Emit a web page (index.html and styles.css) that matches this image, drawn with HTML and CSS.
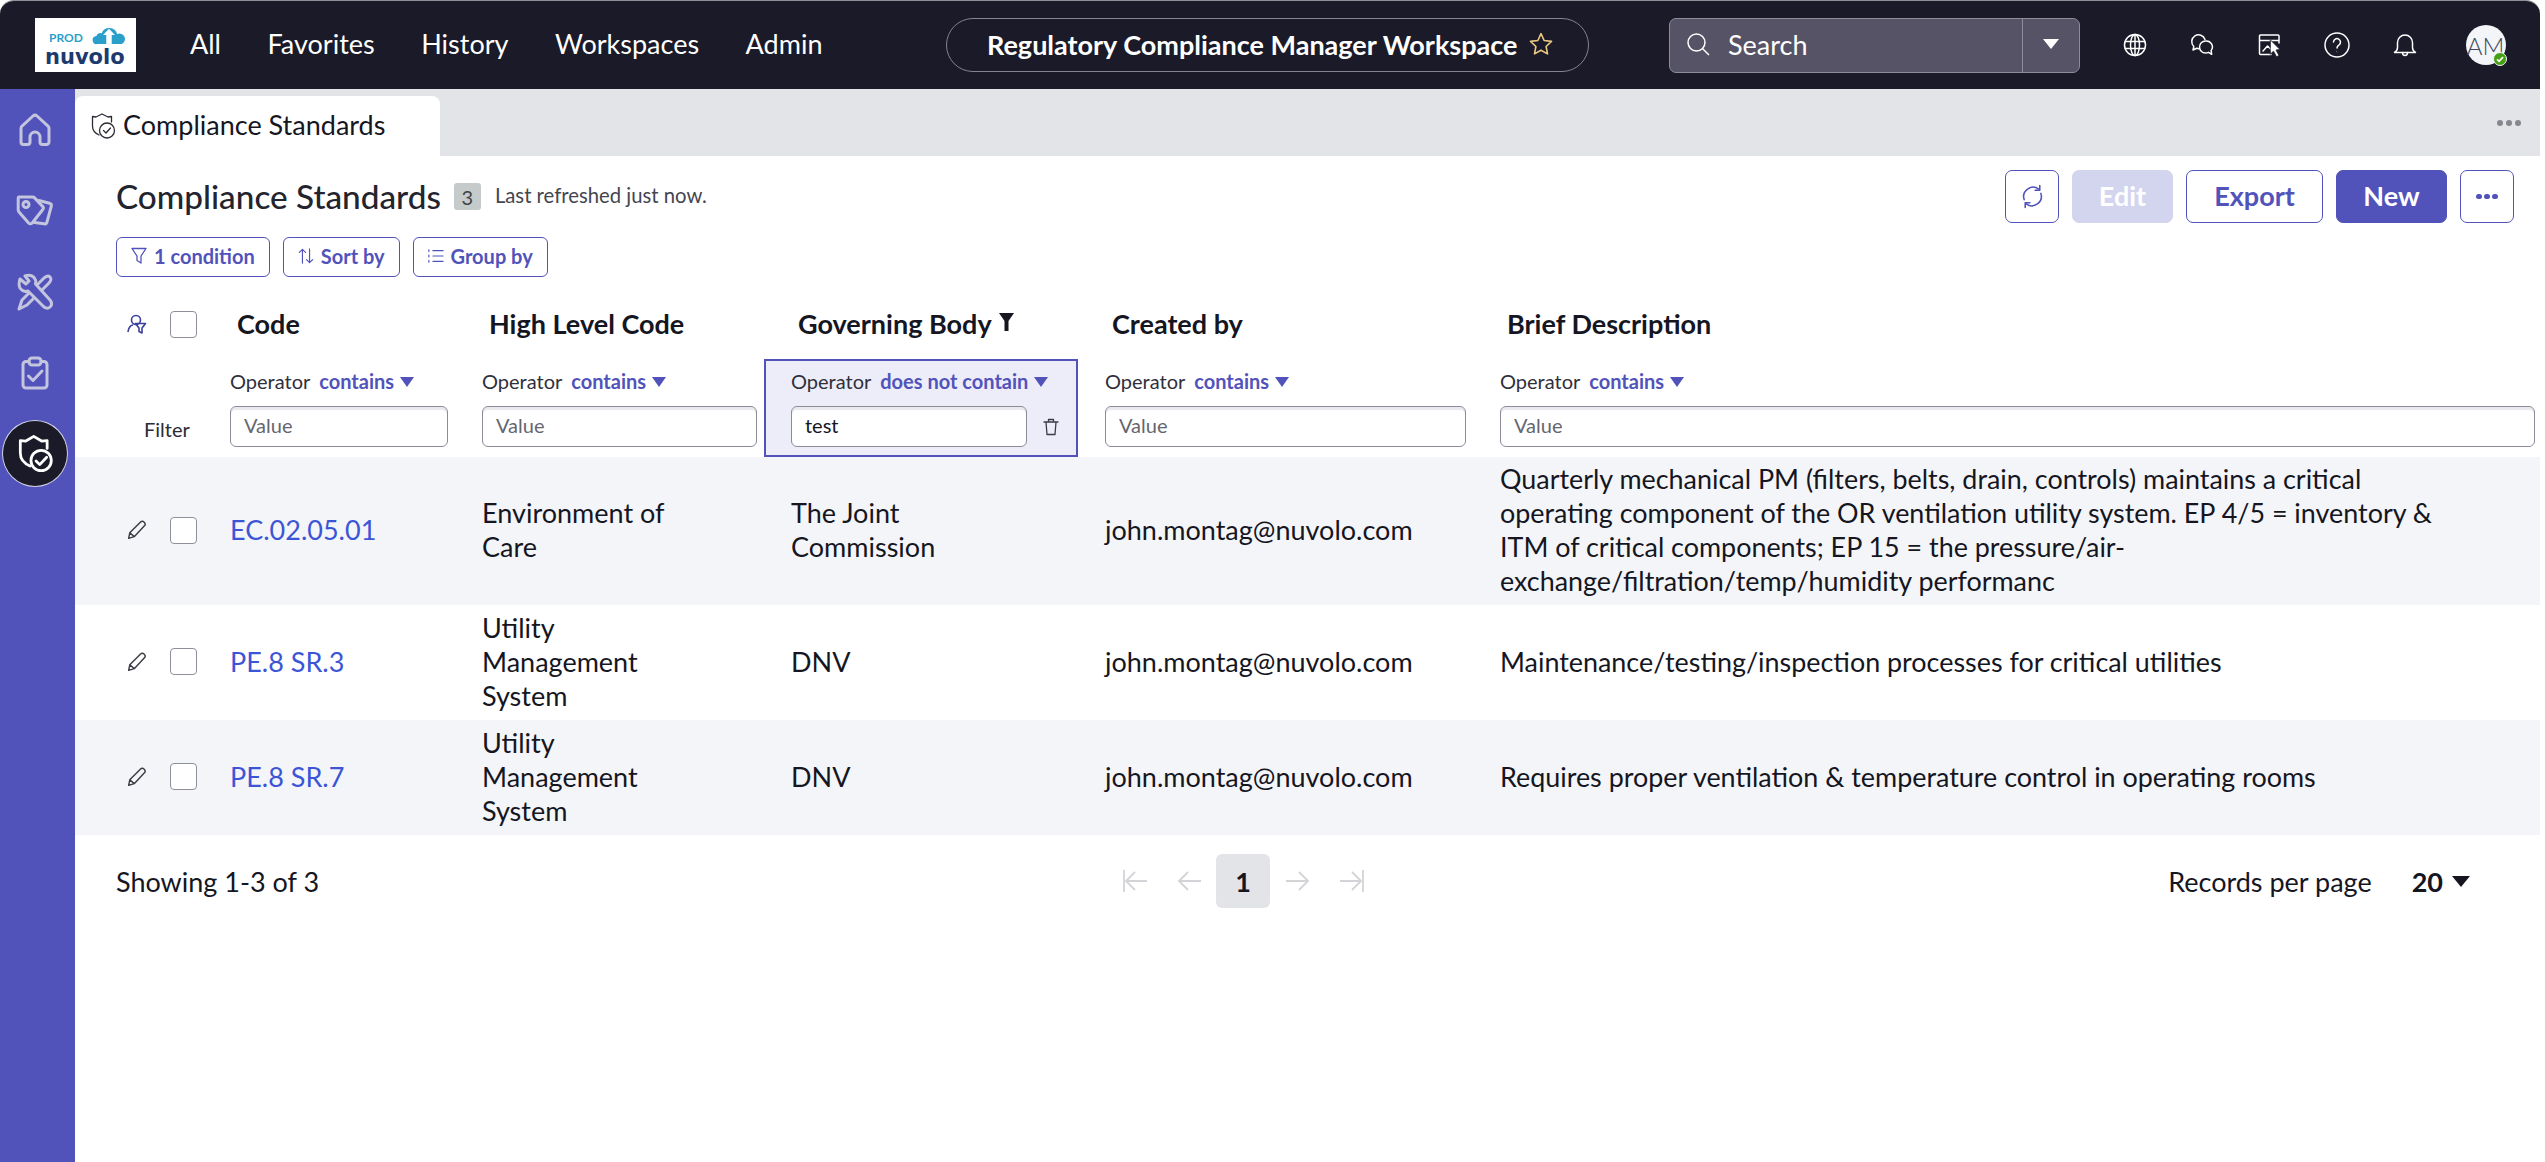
FILE: index.html
```html
<!DOCTYPE html>
<html lang="en">
<head>
<meta charset="utf-8">
<title>Compliance Standards</title>
<link rel="stylesheet" href="styles.css">
</head>
<body>
<div class="app">
  <header class="topbar">
    <div class="logo">
      <div class="logo-top">
        <span class="logo-prod">PROD</span>
        <svg class="logo-cloud" viewBox="0 0 36 22"><path fill="#2a9fc9" d="M5 21a4.500 4.500 0 0 1-1-9 5 5 0 0 1 6-3 9 9 0 0 1 17 1 5.500 5.500 0 0 1 5 11z"/><path fill="#fff" d="M18 4l6.500 7H21v10h-6V11h-3.500z"/></svg>
      </div>
      <span class="logo-name">nuvolo</span>
    </div>
    <nav class="nav">
      <a>All</a><a>Favorites</a><a>History</a><a>Workspaces</a><a>Admin</a>
    </nav>
    <div class="pill">
      <span>Regulatory Compliance Manager Workspace</span>
      <svg class="star" viewBox="0 0 24 24"><path d="M12 2.500l2.900 6.300 6.800.8-5 4.700 1.300 6.800-6-3.400-6 3.400 1.300-6.800-5-4.700 6.800-.8z"/></svg>
    </div>
    <div class="search">
      <div class="search-main">
        <svg class="search-icon" viewBox="0 0 24 24"><circle cx="10.500" cy="10.500" r="8.500"/><path d="M16.500 16.500L23 23"/></svg>
        <span>Search</span>
      </div>
      <div class="search-drop"><i class="caret-white"></i></div>
    </div>
    <div class="top-icons">
      <div class="ti"><svg viewBox="0 0 24 24"><circle cx="12" cy="12" r="10.500"/><ellipse cx="12" cy="12" rx="4.500" ry="10.500"/><path d="M2.200 8.500h19.600M2.200 15.500h19.600M12 1.500v21"/></svg></div>
      <div class="ti"><svg viewBox="0 0 24 24"><path d="M15 6.500A6.800 6.800 0 1 0 3.800 13.500L3 17l3.800-1.800c.7.300 1.400.4 2.200.5"/><path d="M15.500 8a6 6 0 1 0 0 12c1.100 0 2.100-.2 3-.7l3.200 2-.6-3.700A6 6 0 0 0 15.500 8z"/></svg></div>
      <div class="ti"><svg viewBox="0 0 24 24"><path d="M21 10V3a1 1 0 0 0-1-1H2.500a1 1 0 0 0-1 1v17.500a1 1 0 0 0 1 1H13M1.500 7.500H21M5 18l4.500-5 3 3"/><path class="fill" d="M12.500 7l9.500 9.500-4 .5 3 5.500-2.500 1.300-3-5.600-3 2.800z"/></svg></div>
      <div class="ti"><svg class="tall" viewBox="0 0 26 26"><circle cx="13" cy="13" r="12"/><path d="M9.500 10a3.500 3.500 0 1 1 5.500 3c-1.400.9-2 1.500-2 3"/><circle class="fill" cx="13" cy="19.500" r=".8"/></svg></div>
      <div class="ti"><svg viewBox="0 0 24 24"><path d="M1.500 19.500c1.800-1 3-2.500 3-5V9.500a7.500 7.500 0 0 1 15 0v5c0 2.500 1.200 4 3 5z"/><path d="M9.500 19.500c0 4 5 4 5 0"/></svg></div>
      <div class="avatar">AM<span class="status"><svg viewBox="0 0 12 12"><path d="M3 6.300l2.100 2L9 4.200"/></svg></span></div>
    </div>
  </header>

  <div class="body">
    <aside class="side">
      <a class="side-item"><svg class="s-home" viewBox="0 0 34 34"><path d="M3 29V15.500a3 3 0 0 1 1-2.300L15 3a3 3 0 0 1 4 0l11 10.200a3 3 0 0 1 1 2.300V29a2.500 2.500 0 0 1-2.500 2.500h-4A2.500 2.500 0 0 1 22 29v-5a5 5 0 0 0-10 0v5a2.500 2.500 0 0 1-2.500 2.500h-4A2.500 2.500 0 0 1 3 29z"/></svg></a>
      <a class="side-item"><svg class="s-tag" viewBox="0 0 38 32"><path d="M3 2h13.500a3 3 0 0 1 2.100.9l8 8.500a2.500 2.500 0 0 1 0 3.400L16.200 28a2.500 2.500 0 0 1-3.600 0L3 17a3 3 0 0 1-.8-2V3a1 1 0 0 1 .8-1z"/><circle cx="10" cy="9.500" r="3"/><path d="M23 5.500l10.500 2.700a2.500 2.500 0 0 1 1.800 3L31 27a2.500 2.500 0 0 1-3 1.800l-9.500-1.300"/></svg></a>
      <a class="side-item"><svg class="s-tools" viewBox="0 0 36 38"><path d="M2 36l3-9L27 5c2-2 4.500-2.500 6-1s1 4-1 6L10 32z"/><path class="wrench" d="M3 6l6 5 3-3-4-5c5-2 9 0 10.500 4 .5 1.500.3 3 0 4L33 27c2.500 3 1.500 5.500 0 7-2 1.800-5 1.500-7-1L11 18c-3 1-6 0-8-3-1.500-3-1-6 0-9z"/></svg></a>
      <a class="side-item"><svg class="s-clip" viewBox="0 0 28 34"><path d="M8 5.500H5a3 3 0 0 0-3 3V29a3 3 0 0 0 3 3h18a3 3 0 0 0 3-3V8.500a3 3 0 0 0-3-3h-3"/><rect x="8" y="2" width="12" height="7" rx="3"/><path d="M7.500 20l4.500 4.500L21 15"/></svg></a>
      <a class="side-item active"><svg class="s-shield" viewBox="0 0 40 40"><path d="M13 33C6 30 2.500 25 2.500 19V5.500l6 .5 8.500-5 8.500 5 6-.5V14"/><circle cx="25" cy="27" r="11"/><path d="M19.500 27.500l4 4L31 23.500"/></svg></a>
    </aside>

    <main class="content">
      <div class="tabs">
        <div class="tab">
          <svg class="tab-icon" viewBox="0 0 26 26"><path d="M8 22C3.500 20 1.500 16.500 1.500 13V3.500l3.500.5 6-3 6 3 3.500-.5V9"/><circle cx="16" cy="17.500" r="7.500"/><path d="M12.500 17.500l2.500 2.500 4.500-5"/></svg>
          <span>Compliance Standards</span>
        </div>
        <div class="tabs-more"><i></i><i></i><i></i></div>
      </div>

      <section class="page">
        <div class="page-head">
          <div class="title-wrap">
            <h1>Compliance Standards</h1>
            <span class="count">3</span>
            <span class="refreshed">Last refreshed just now.</span>
          </div>
          <div class="actions">
            <button class="btn icon-btn"><svg viewBox="0 0 24 24"><path d="M4 15A9 9 0 0 1 18 5M20 9a9 9 0 0 1-14 10"/><path d="M19 1.500V6h-4.500M5 22.500V18h4.500"/></svg></button>
            <button class="btn disabled">Edit</button>
            <button class="btn outline">Export</button>
            <button class="btn solid">New</button>
            <button class="btn icon-btn"><span class="dots"><i></i><i></i><i></i></span></button>
          </div>
        </div>
        <div class="chips">
          <button class="chip"><svg viewBox="0 0 16 18"><path d="M1 1.500h14L10 9v7l-4-2.500V9z"/></svg>1 condition</button>
          <button class="chip"><svg viewBox="0 0 18 18"><path d="M5 17V1.500M1.500 5L5 1.500 8.500 5M13 1v15.500M9.500 13l3.500 3.500 3.500-3.500"/></svg>Sort by</button>
          <button class="chip"><svg viewBox="0 0 18 18"><path d="M5.500 3H17M5.500 9H17M5.500 15H17M1 2v2M1 8v2M1 14v2"/></svg>Group by</button>
        </div>

        <div class="table">
          <div class="grid head">
            <div class="tools">
              <svg class="personalize" viewBox="0 0 20 20"><circle cx="9" cy="6" r="4.500"/><path d="M1 18c.5-4 2-6.500 5-7M8.500 9.500h10l-3.500 4.500v5l-3-1.500V14z"/></svg>
              <span class="check"></span>
            </div>
            <div class="th">Code</div>
            <div class="th">High Level Code</div>
            <div class="th">Governing Body<svg class="th-funnel" viewBox="0 0 15 18"><path d="M0 0h15L9.500 8v10h-4V8z"/></svg></div>
            <div class="th">Created by</div>
            <div class="th">Brief Description</div>
          </div>

          <div class="grid filters">
            <div class="filter-label">Filter</div>
            <div class="fc">
              <div class="op">Operator <b>contains</b><i class="caret-blue"></i></div>
              <input class="val" placeholder="Value">
            </div>
            <div class="fc">
              <div class="op">Operator <b>contains</b><i class="caret-blue"></i></div>
              <input class="val" placeholder="Value">
            </div>
            <div class="fc on">
              <div class="op">Operator <b>does not contain</b><i class="caret-blue"></i></div>
              <div class="val-row">
                <input class="val" value="test">
                <svg class="trash" viewBox="0 0 16 18"><path d="M1 4h14M5.500 4V1.500h5V4M3 4l1 12.500h8L13 4"/></svg>
              </div>
            </div>
            <div class="fc">
              <div class="op">Operator <b>contains</b><i class="caret-blue"></i></div>
              <input class="val" placeholder="Value">
            </div>
            <div class="fc last">
              <div class="op">Operator <b>contains</b><i class="caret-blue"></i></div>
              <input class="val" placeholder="Value">
            </div>
          </div>

          <div class="grid row alt">
            <div class="tools"><svg class="pencil" viewBox="0 0 18 18"><path d="M1.500 16.500l1-5L12 2c1-1 2.500-1 3.500 0s1 2.500 0 3.500L6.500 15zM2.500 11.500l4 3.500"/></svg><span class="check"></span></div>
            <div class="td"><a class="link">EC.02.05.01</a></div>
            <div class="td"><span class="narrow">Environment of Care</span></div>
            <div class="td"><span class="narrow">The Joint Commission</span></div>
            <div class="td">john.montag@nuvolo.com</div>
            <div class="td"><span class="desc">Quarterly mechanical PM (filters, belts, drain, controls) maintains a critical operating component of the OR ventilation utility system. EP 4/5 = inventory &amp; ITM of critical components; EP 15 = the pressure/air-exchange/filtration/temp/humidity performanc</span></div>
          </div>
          <div class="grid row">
            <div class="tools"><svg class="pencil" viewBox="0 0 18 18"><path d="M1.500 16.500l1-5L12 2c1-1 2.500-1 3.500 0s1 2.500 0 3.500L6.500 15zM2.500 11.500l4 3.500"/></svg><span class="check"></span></div>
            <div class="td"><a class="link">PE.8 SR.3</a></div>
            <div class="td"><span class="narrow">Utility Management System</span></div>
            <div class="td">DNV</div>
            <div class="td">john.montag@nuvolo.com</div>
            <div class="td"><span class="desc">Maintenance/testing/inspection processes for critical utilities</span></div>
          </div>
          <div class="grid row alt">
            <div class="tools"><svg class="pencil" viewBox="0 0 18 18"><path d="M1.500 16.500l1-5L12 2c1-1 2.500-1 3.500 0s1 2.500 0 3.500L6.500 15zM2.500 11.500l4 3.500"/></svg><span class="check"></span></div>
            <div class="td"><a class="link">PE.8 SR.7</a></div>
            <div class="td"><span class="narrow">Utility Management System</span></div>
            <div class="td">DNV</div>
            <div class="td">john.montag@nuvolo.com</div>
            <div class="td"><span class="desc">Requires proper ventilation &amp; temperature control in operating rooms</span></div>
          </div>
        </div>

        <div class="foot">
          <div class="showing">Showing 1-3 of 3</div>
          <div class="pager">
            <svg viewBox="0 0 24 22"><path d="M1 0v22M24 11H3M12 2l-9 9 9 9"/></svg>
            <svg viewBox="0 0 24 22"><path d="M24 11H2M11 2l-9 9 9 9"/></svg>
            <span class="page-num">1</span>
            <svg viewBox="0 0 24 22"><path d="M0 11h22M13 2l9 9-9 9"/></svg>
            <svg viewBox="0 0 24 22"><path d="M23 0v22M0 11h21M12 2l9 9-9 9"/></svg>
          </div>
          <div class="rpp">Records per page <b>20</b><i class="caret-dark"></i></div>
        </div>
      </section>
    </main>
  </div>
</div>
</body>
</html>
```

FILE: styles.css
```css
* { box-sizing: border-box; }
html, body { margin: 0; height: 100%; background: #fff; overflow: hidden; }
body { font-family: "Lato", "Liberation Sans", sans-serif; color: #15161f; font-size: 27px; }
svg { display: block; fill: none; }
i { font-style: normal; }

.app { width: 2540px; height: 100vh; display: flex; flex-direction: column; background: #fff; border-radius: 14px 14px 0 0; overflow: hidden; border-top: 1px solid #8e8e96; }

/* top bar */
.topbar { height: 88px; flex: none; background: #1a1a28; display: flex; align-items: center; padding-left: 35px; color: #fff; }
.logo { width: 101px; height: 54px; background: #fff; display: flex; flex-direction: column; padding: 7px 0 0 10px; flex: none; }
.logo-top { display: flex; align-items: flex-end; gap: 9px; height: 20px; padding-left: 4px; }
.logo-prod { color: #2a9fc9; font-size: 12px; font-weight: 700; line-height: 14px; }
.logo-cloud { width: 34px; height: 20px; }
.logo-name { color: #1d3a6e; font-family: "DejaVu Sans", sans-serif; font-size: 21px; font-weight: 700; line-height: 24px; }
.nav { display: flex; gap: 46.500px; margin-left: 54px; width: 756px; flex: none; padding-bottom: 3px; }
.pill { width: 643px; height: 54px; flex: none; border: 1px solid #85858f; border-radius: 27px; display: flex; align-items: center; padding-left: 40px; gap: 11px; font-weight: 700; padding-bottom: 2px; }
.star { width: 26px; height: 26px; stroke: #e9c77f; stroke-width: 1.500; stroke-linejoin: round; }
.search { margin-left: 80px; width: 411px; height: 55px; flex: none; background: #565366; border: 1px solid #8d8c98; border-radius: 7px; display: flex; }
.search-main { flex: 1; display: flex; align-items: center; padding-left: 16px; gap: 18px; padding-bottom: 2px; }
.search-icon { width: 24px; height: 24px; stroke: #fff; stroke-width: 1.500; }
.search-drop { width: 57px; border-left: 1px solid #8d8c98; display: flex; align-items: center; justify-content: center; padding-bottom: 3px; }
.caret-white { width: 0; height: 0; border: 8.500px solid transparent; border-top: 10px solid #fff; border-bottom: 0; }
.top-icons { display: flex; align-items: center; margin-left: 21px; }
.ti { width: 67.500px; display: flex; justify-content: center; }
.ti svg { width: 24px; height: 24px; stroke: #fff; stroke-width: 1.500; stroke-linecap: round; stroke-linejoin: round; }
.ti svg.tall { width: 26px; height: 26px; }
.ti .fill { fill: #fff; stroke: #1a1a28; stroke-width: .8; }
.avatar { position: relative; margin-left: 27px; width: 40px; height: 40px; border-radius: 50%; background: #f4f5f8; color: #3d4a5f; font-size: 24px; font-weight: 300; display: flex; align-items: center; justify-content: center; }
.status { position: absolute; right: -1px; bottom: -1px; width: 14px; height: 14px; border-radius: 50%; background: #44a012; border: 1px solid #f4f5f8; }
.status svg { width: 12px; height: 12px; stroke: #fff; stroke-width: 1.800; }

/* body */
.body { flex: 1; display: flex; min-height: 0; }
.side { width: 75px; flex: none; background: #5153bb; display: flex; flex-direction: column; align-items: flex-start; padding-left: 2px; }
.side-item { width: 66px; height: 81px; flex: none; display: flex; align-items: center; justify-content: center; color: #c3c4de; }
.side-item svg { stroke: currentColor; stroke-width: 3; stroke-linecap: round; stroke-linejoin: round; }
.s-home { width: 34px; height: 34px; }
.s-tag { width: 38px; height: 32px; }
.s-tools { width: 36px; height: 38px; }
.s-tools .wrench { fill: #5153bb; }
.s-clip { width: 28px; height: 34px; }
.side-item.active { height: 67px; border-radius: 50%; background: #1a1a28; border: 1px solid #d4d4e6; color: #fff; margin-top: 7px; }
.s-shield { width: 37px; height: 40px; margin-left: 2px; }

.content { flex: 1; min-width: 0; display: flex; flex-direction: column; }
.tabs { height: 67px; flex: none; background: #e3e4e8; padding-top: 7px; display: flex; justify-content: space-between; }
.tab { width: 365px; background: #fff; border-radius: 8px 8px 0 0; display: flex; align-items: center; padding-left: 16px; gap: 6px; padding-bottom: 3px; }
.tab-icon { width: 26px; height: 26px; stroke: #2b2c36; stroke-width: 1.300; stroke-linecap: round; stroke-linejoin: round; margin-top: 3px; }
.tabs-more { display: flex; gap: 3px; align-items: center; padding-right: 19px; padding-bottom: 7px; }
.tabs-more i { width: 6px; height: 6px; border-radius: 50%; background: #85868e; }

.page-head { display: flex; justify-content: space-between; align-items: center; padding: 14px 26px 0 41px; }
.title-wrap { display: flex; align-items: center; }
h1 { margin: 0; font-size: 33.300px; font-weight: 500; color: #23242e; line-height: 53px; }
.count { margin-left: 13px; width: 27px; height: 27px; background: #c5cacb; border-radius: 3px; font-size: 20px; color: #444; display: flex; align-items: center; justify-content: center; }
.refreshed { margin-left: 14px; font-size: 20.300px; color: #44464f; padding-bottom: 3px; }
.actions { display: flex; gap: 13px; }
.btn { height: 53px; border-radius: 7px; font: 700 27px "Lato", sans-serif; background: #fff; color: #5153bb; border: 1px solid #5153bb; padding: 0 0 2px; display: flex; align-items: center; justify-content: center; }
.icon-btn { width: 54px; padding: 0; }
.icon-btn svg { width: 25px; height: 25px; stroke: #5153bb; stroke-width: 1.500; stroke-linecap: round; stroke-linejoin: round; }
.disabled { width: 101px; background: #d3d4ee; border-color: #d3d4ee; color: #fff; }
.outline { width: 137px; }
.solid { width: 111px; background: #5153bb; color: #fff; }
.dots { display: flex; gap: 2.500px; }
.dots i { width: 5.500px; height: 5.500px; border-radius: 50%; background: #5153bb; }

.chips { display: flex; gap: 13px; padding: 14px 0 0 41px; }
.chip { height: 40px; border: 1px solid #5153bb; border-radius: 6px; background: #fff; color: #5153bb; font: 700 20px "Lato", sans-serif; display: flex; align-items: center; gap: 7px; padding: 0 14px 2px; white-space: nowrap; }
.chip svg { width: 16px; height: 18px; stroke: #5153bb; stroke-width: 1.300; stroke-linejoin: round; stroke-linecap: round; }

.table { margin-top: 18px; }
.grid { display: grid; grid-template-columns: 128px 252px 309px 314px 395px 1067px; }
.head { height: 64px; align-items: center; padding-bottom: 7px; }
.head .tools { padding-top: 3px; }
.th { padding-left: 34px; font-weight: 700; display: flex; align-items: center; gap: 7px; }
.th-funnel { width: 15px; height: 18px; fill: #15161f; margin-bottom: 4px; }
.tools { display: flex; align-items: center; padding-left: 52px; gap: 23px; padding-bottom: 2px; }
.personalize { width: 20px; height: 20px; flex: none; stroke: #3c3f9e; stroke-width: 1.600; stroke-linejoin: round; }
.pencil { width: 20px; height: 20px; flex: none; stroke: #3b3c46; stroke-width: 1.300; stroke-linejoin: round; }
.check { width: 27px; height: 27px; flex: none; border: 1px solid #8f8f9a; border-radius: 4px; background: #fff; }

.filters { height: 98px; }
.filter-label { padding: 57px 0 0 69px; font-size: 20px; line-height: 26px; color: #2a2b35; }
.fc { padding: 9px 7px 0 27px; }
.fc.last { padding-right: 5px; }
.fc.on { background: #ecedf8; border: 2px solid #5153bb; padding: 7px 0 0 25px; }
.op { height: 26px; line-height: 26px; margin-bottom: 12px; font-size: 20px; color: #2f303b; white-space: nowrap; display: flex; align-items: center; }
.op b { font-weight: 700; color: #5153bb; margin-left: 9px; }
.caret-blue { width: 0; height: 0; margin-left: 6px; border: 7.500px solid transparent; border-top: 10px solid #5153bb; border-bottom: 0; margin-top: 2px; }
.val { display: block; width: 100%; height: 41px; border: 1px solid #8b8b9a; border-radius: 6px; padding: 0 13px 4px; font: 400 20px "Lato", sans-serif; color: #15161f; background: #fff; box-shadow: inset 0 3px 0 #e9e9ee; outline: 0; }
.val::placeholder { color: #65666f; opacity: 1; }
.val-row { display: flex; align-items: center; gap: 16px; }
.val-row .val { width: 236px; flex: none; }
.trash { width: 16px; height: 18px; stroke: #3b3c46; stroke-width: 1.300; stroke-linejoin: round; stroke-linecap: round; flex: none; }

.row { min-height: 115px; line-height: 34px; }
.row.alt { background: #f4f5f8; }
.td { padding: 5px 7px 7px 27px; display: flex; align-items: center; }
.link { color: #3c55d6; }
.narrow { max-width: 200px; }
.desc { max-width: 955px; font-size: 26.900px; }

.foot { display: flex; align-items: center; height: 92px; padding: 0 70px 0 41px; }
.showing { width: 1007px; flex: none; }
.pager { display: flex; align-items: center; }
.pager svg { width: 24px; height: 22px; stroke: #d3d4d8; stroke-width: 1.800; }
.pager svg + svg { margin-left: 30px; }
.page-num { width: 54px; height: 54px; border-radius: 6px; background: #e3e4e8; font-weight: 700; display: flex; align-items: center; justify-content: center; margin: 0 16px 0 15px; }
.rpp { margin-left: auto; display: flex; align-items: center; white-space: nowrap; }
.rpp b { margin-left: 40px; }
.caret-dark { width: 0; height: 0; margin-left: 9px; border: 9.500px solid transparent; border-top: 11px solid #15161f; border-bottom: 0; }
```
